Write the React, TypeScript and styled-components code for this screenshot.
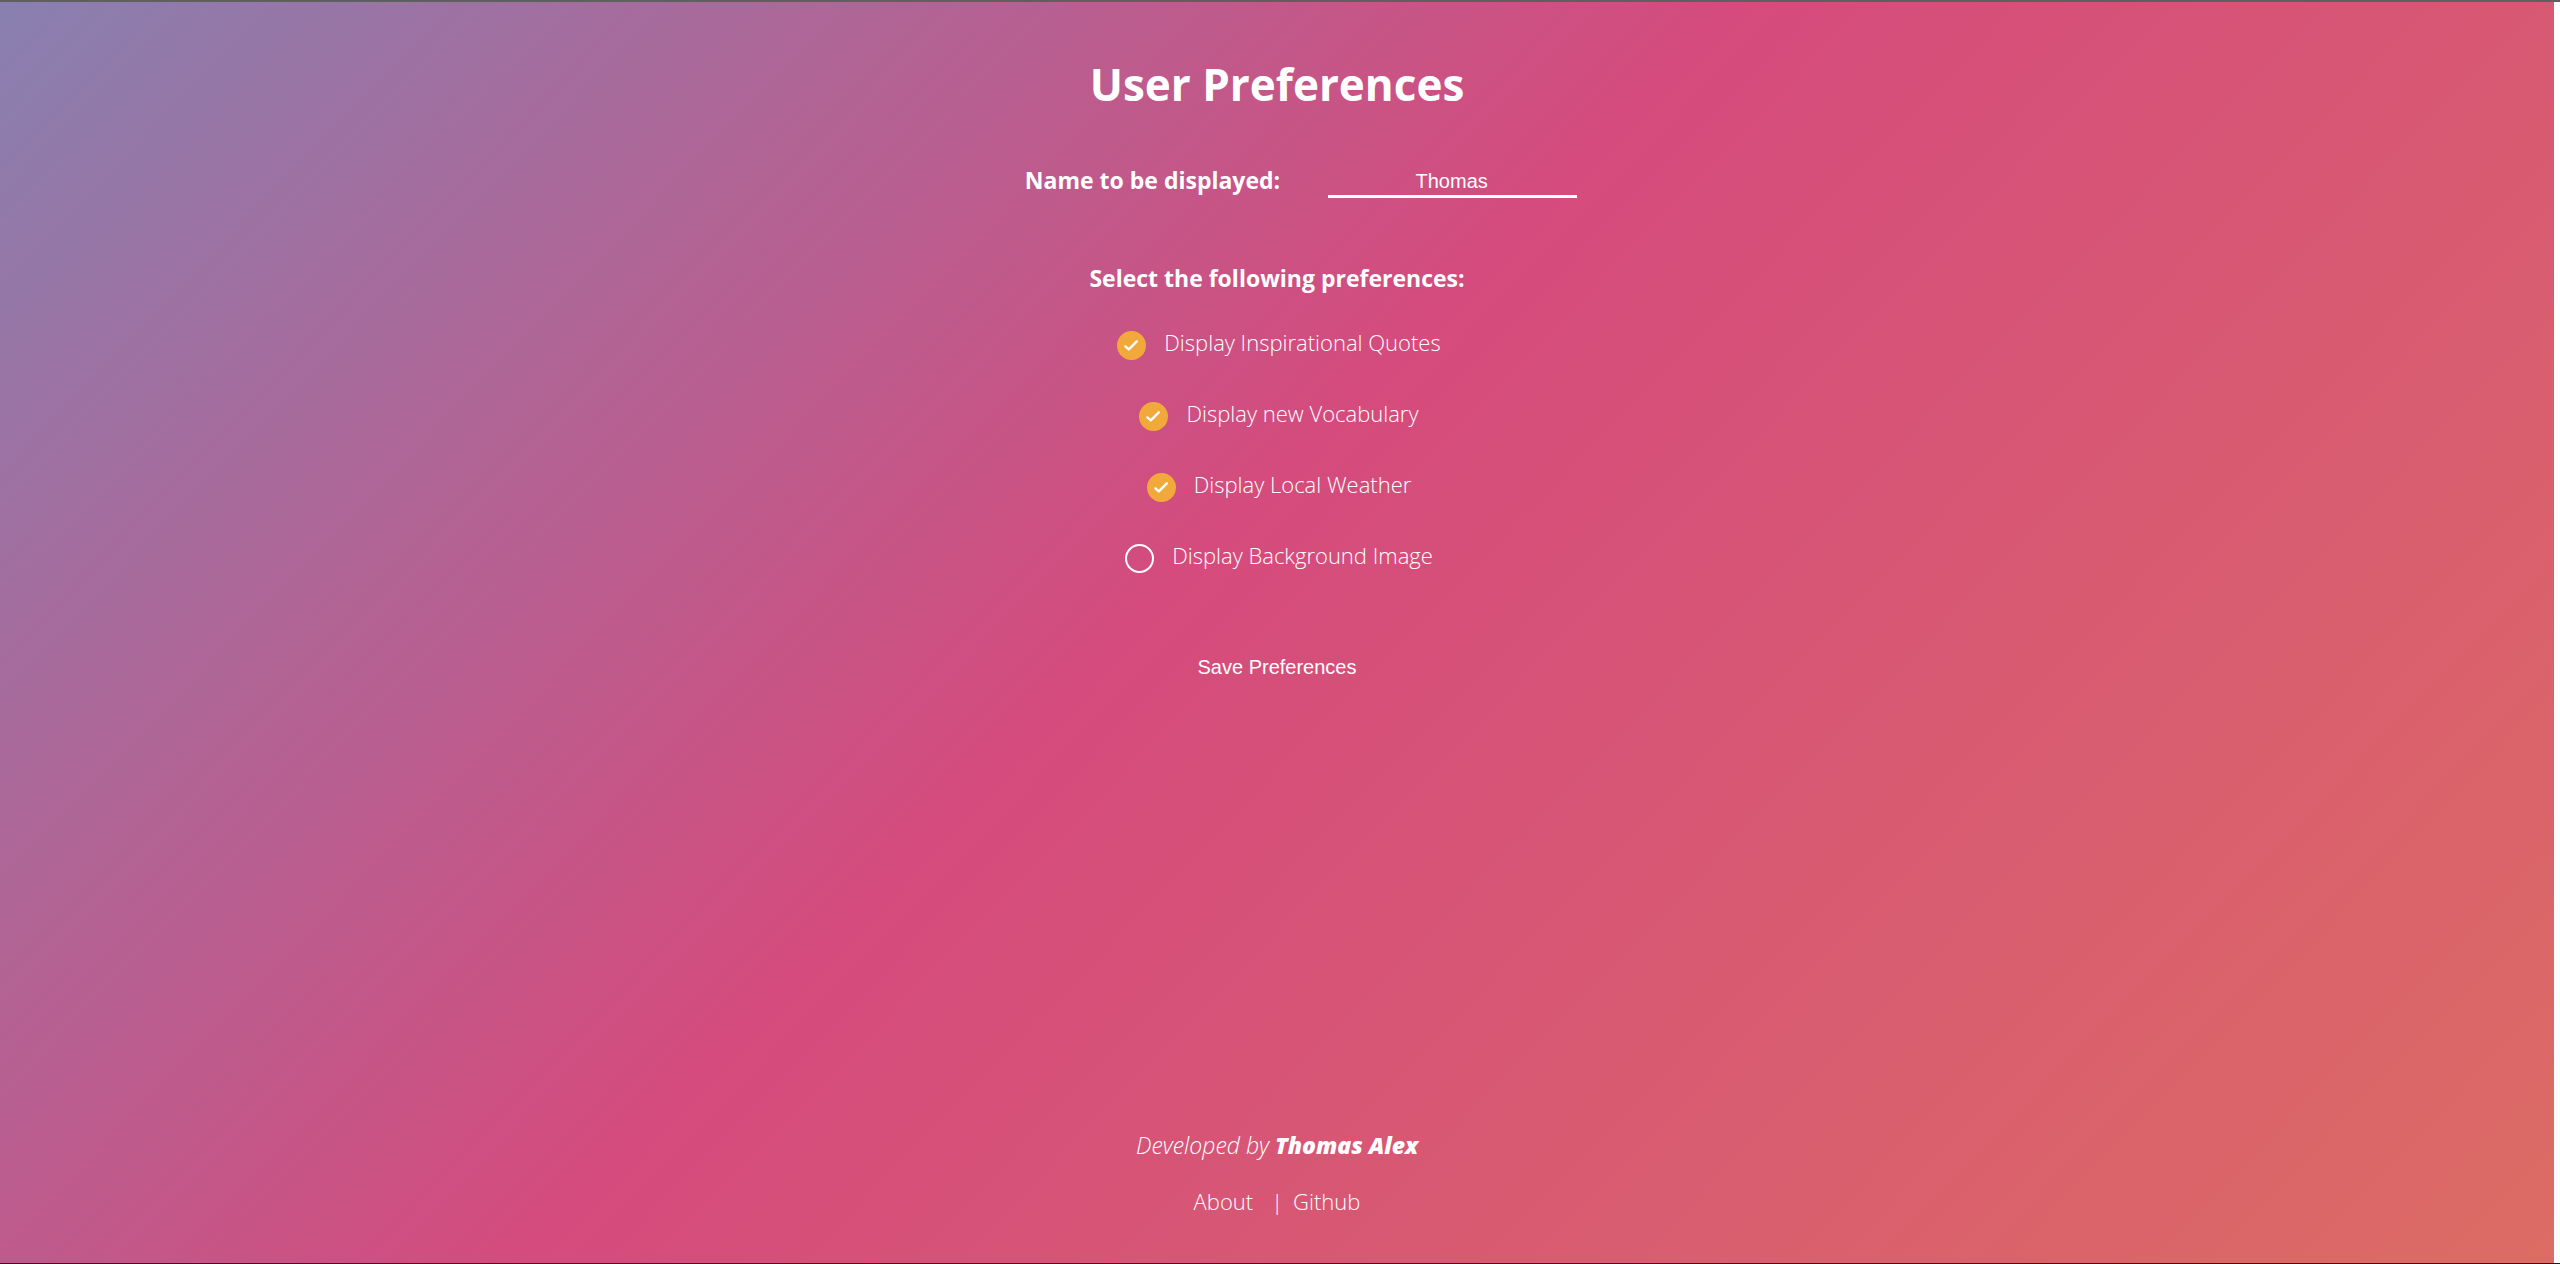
import React, { useState } from "react";
import styled, { createGlobalStyle } from "styled-components";

const GlobalStyle = createGlobalStyle`
  *, *::before, *::after { box-sizing: border-box; }
  body {
    margin: 0;
    color: #fff;
    font-family: "Segoe UI", "Open Sans", sans-serif;
    font-size: 22px;
    font-weight: 300;
    line-height: 32px;
  }
`;

const Frame = styled.div`
  display: flex;
  min-height: 100vh;
  border-top: 2px solid #5f5f5f;
  border-bottom: 1px solid #1d1a2b;
  background: #fff;
`;

const Page = styled.div`
  flex: 1;
  display: flex;
  flex-direction: column;
  align-items: center;
  margin-right: 6px;
  padding: 50px 0 46px;
  background: linear-gradient(134deg, #8880b0 0%, #d54b7d 46%, #dc6c64 100%);
`;

const Form = styled.form`
  display: flex;
  flex-direction: column;
  align-items: center;
`;

const Title = styled.h1`
  margin: 0 0 46px;
  font-size: 44px;
  font-weight: 700;
  line-height: 64px;
`;

const NameRow = styled.div`
  display: flex;
  align-items: flex-start;
  gap: 48px;
  padding-left: 48px;
`;

const NameLabel = styled.label`
  padding-top: 2px;
  font-size: 23px;
  font-weight: 700;
`;

const NameInput = styled.input`
  width: 249px;
  height: 36px;
  margin: 0;
  padding: 5px 2px 0 0;
  border: 0;
  border-bottom: 3px solid #fff;
  border-radius: 0;
  outline: 0;
  background: transparent;
  color: #fff;
  font: 400 20px/24px "Liberation Sans", Arial, sans-serif;
  text-align: center;
`;

const Options = styled.fieldset`
  display: flex;
  flex-direction: column;
  align-items: center;
  gap: 39px;
  min-width: 0;
  margin: 64px 0 0;
  padding: 0;
  border: 0;
`;

const Legend = styled.legend`
  margin-bottom: 32px;
  padding: 0;
  font-size: 23px;
  font-weight: 700;
`;

const Option = styled.label`
  display: flex;
  gap: 18px;
  height: 32px;
  padding-left: 4px;
  cursor: pointer;
`;

const TickHolder = styled.span`
  display: grid;
  place-items: center;
  width: 29px;
  height: 29px;
  margin-top: 5px;
`;

const Tick = styled.input`
  grid-area: 1 / 1;
  appearance: none;
  width: 29px;
  height: 29px;
  margin: 0;
  border: 2px solid #fff;
  border-radius: 50%;
  cursor: pointer;

  &:checked {
    border-color: #f2a93b;
    background: #f2a93b;
  }
`;

const TickMark = styled.svg`
  grid-area: 1 / 1;
  width: 29px;
  height: 29px;
  pointer-events: none;
  z-index: 1;
`;

const SaveButton = styled.button`
  margin: 76px 0 0;
  padding: 8px 16px;
  border: 0;
  background: transparent;
  color: #fff;
  font: 400 20px/24px "Liberation Sans", Arial, sans-serif;
  cursor: pointer;
`;

const Footer = styled.footer`
  display: flex;
  flex-direction: column;
  align-items: center;
  gap: 24px;
  margin-top: auto;
`;

const Credit = styled.p`
  margin: 0;
  font-size: 23px;
  font-style: italic;

  strong { font-weight: 800; }
`;

const Links = styled.nav`
  display: flex;

  span { padding: 0 10px 0 18px; }
`;

const FooterLink = styled.a`
  color: #fff;
  text-decoration: none;
`;

const preferences = [
  { id: "quotes", text: "Display Inspirational Quotes", on: true },
  { id: "vocabulary", text: "Display new Vocabulary", on: true },
  { id: "weather", text: "Display Local Weather", on: true },
  { id: "background", text: "Display Background Image", on: false },
];

function Preference({ id, text, on }: { id: string; text: string; on: boolean }) {
  const [checked, setChecked] = useState(on);
  return (
    <Option htmlFor={id}>
      <TickHolder>
        <Tick id={id} type="checkbox" checked={checked} onChange={() => setChecked(!checked)} />
        {checked && (
          <TickMark viewBox="0 0 29 29" aria-hidden="true">
            <path d="M8.4 15.4 11.8 18.4 19.8 10.4" fill="none" stroke="#fff" strokeWidth="2.4" strokeLinecap="round" strokeLinejoin="round" />
          </TickMark>
        )}
      </TickHolder>
      {text}
    </Option>
  );
}

export default function App() {
  const [name, setName] = useState("Thomas");
  return (
    <Frame>
      <GlobalStyle />
      <Page>
        <Form onSubmit={(event) => event.preventDefault()}>
          <Title>User Preferences</Title>
          <NameRow>
            <NameLabel htmlFor="name">Name to be displayed:</NameLabel>
            <NameInput id="name" type="text" value={name} onChange={(event) => setName(event.target.value)} />
          </NameRow>
          <Options>
            <Legend>Select the following preferences:</Legend>
            {preferences.map((preference) => (
              <Preference key={preference.id} {...preference} />
            ))}
          </Options>
          <SaveButton type="submit">Save Preferences</SaveButton>
        </Form>
        <Footer>
          <Credit>
            Developed by <strong>Thomas Alex</strong>
          </Credit>
          <Links>
            <FooterLink href="#about">About</FooterLink>
            <span>|</span>
            <FooterLink href="#github">Github</FooterLink>
          </Links>
        </Footer>
      </Page>
    </Frame>
  );
}
